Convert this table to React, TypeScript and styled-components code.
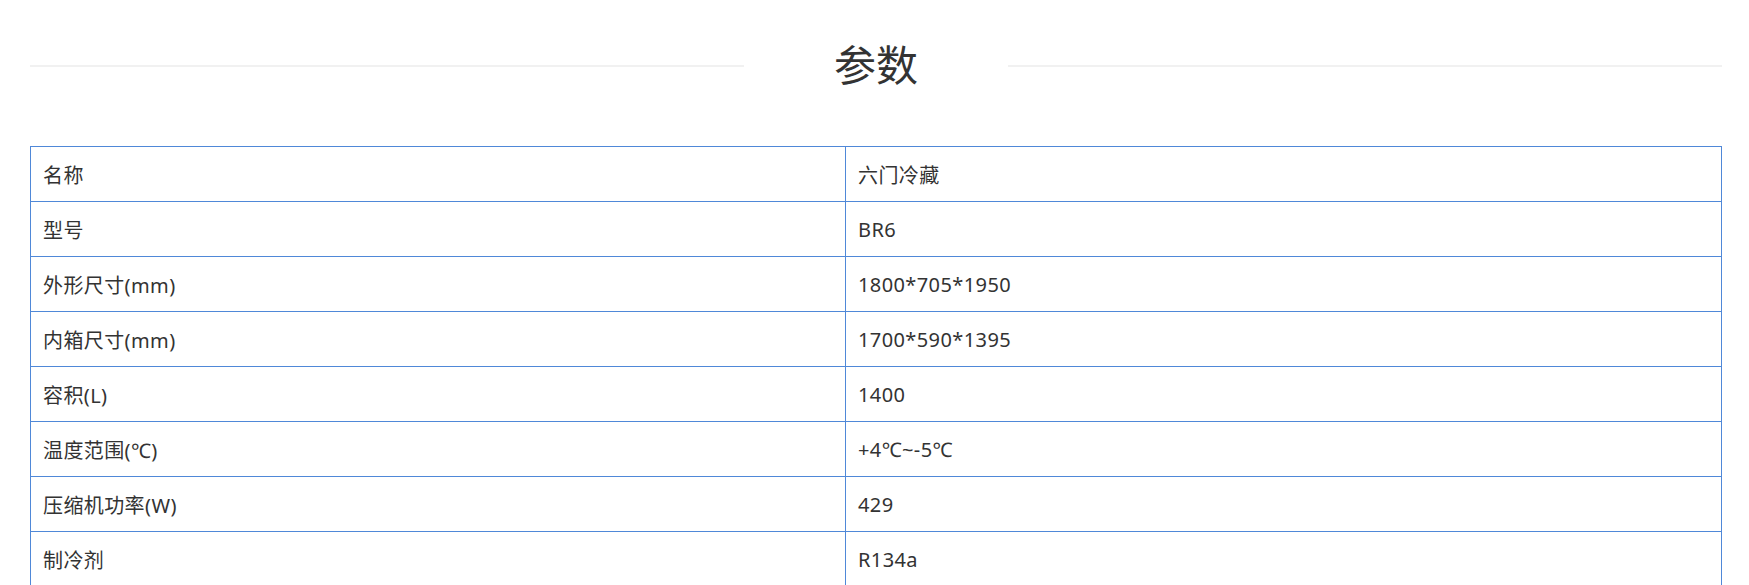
import { createGlobalStyle, styled } from "styled-components"

const rows: [string, string][] = [
  ["名称", "六门冷藏"],
  ["型号", "BR6"],
  ["外形尺寸(mm)", "1800*705*1950"],
  ["内箱尺寸(mm)", "1700*590*1395"],
  ["容积(L)", "1400"],
  ["温度范围(℃)", "+4℃~-5℃"],
  ["压缩机功率(W)", "429"],
  ["制冷剂", "R134a"],
]

function App (): JSX.Element {
  return (
    <>
      <GlobalStyle />
      <Page>
        <Header>
          <Line />
          <Title>参数</Title>
          <Line />
        </Header>
        <Table>
          <tbody>
            {rows.map(([name, value]) => (
              <Row key={name}>
                <NameCell>{name}</NameCell>
                <ValueCell>{value}</ValueCell>
              </Row>
            ))}
          </tbody>
        </Table>
      </Page>
    </>
  )
}

export default App

const GlobalStyle = createGlobalStyle`
  body {
    margin: 0;
    background: #ffffff;
    font-family: "Noto Sans", "Noto Sans CJK SC", sans-serif;
    color: #333333;
  }
`

const Page = styled.div`
  width: 1692px;
  margin-left: 30px;
`

const Header = styled.div`
  display: flex;
  align-items: center;
  height: 131px;
`

const Line = styled.div`
  flex: 1;
  height: 2px;
  background: #f1f1f1;
`

const Title = styled.h2`
  margin: 0 0 6px;
  padding: 0 90px;
  font-size: 42px;
  font-weight: 400;
  line-height: 1;
  color: #333333;
  font-family: "Noto Sans CJK SC", sans-serif;
`

const Table = styled.table`
  width: 100%;
  margin-top: 15px;
  border-collapse: collapse;
  font-size: 20px;
  letter-spacing: 0.4px;
`

const Row = styled.tr`
  height: 55px;
`

const NameCell = styled.td`
  width: 790px;
  padding: 0 12px;
  border: 1px solid #4f88d8;
  vertical-align: middle;
`

const ValueCell = styled.td`
  padding: 0 12px;
  border: 1px solid #4f88d8;
  vertical-align: middle;
`
